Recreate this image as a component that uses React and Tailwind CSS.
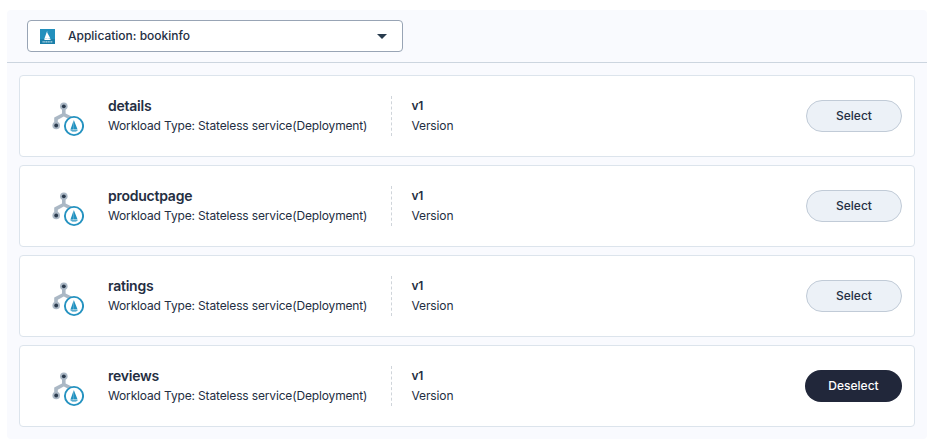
const services = [
  { name: 'details' },
  { name: 'productpage' },
  { name: 'ratings' },
  { name: 'reviews', selected: true },
];

function AppLogo() {
  return (
    <svg className="h-[15px] w-[15px] shrink-0" viewBox="0 0 15 15">
      <rect width="15" height="15" fill="#2290bd" />
      <path d="M0 10h15v5H0z" fill="#1b7fa9" />
      <path d="M7.2 1.8v7.8l-2.9.3z M7.2 3.4l3.2 6.2-3.2.3z M3.8 10.1h7.4l-1.4.9H5z" fill="#fff" />
      <path d="M2.5 12.9h10" stroke="#d9edf5" strokeWidth="1" strokeDasharray="1.3 .4" />
    </svg>
  );
}

function ServiceIcon() {
  return (
    <svg className="mt-[6px] h-[36px] w-[34px] shrink-0" viewBox="0 0 34 36">
      <path d="M13.8 5v8.5L6 17.7V24M13.8 13.5l8 4.2" fill="none" stroke="#abb8c5" strokeWidth="3.6" />
      <circle cx="13.8" cy="5.3" r="3.8" fill="#abb8c5" />
      <circle cx="6.2" cy="24.5" r="3.8" fill="#abb8c5" />
      <circle cx="13.8" cy="5.3" r="1.9" fill="#2b3b4e" />
      <circle cx="6.2" cy="24.5" r="1.9" fill="#2b3b4e" />
      <circle cx="24" cy="25" r="9.1" fill="#fff" stroke="#2492c0" strokeWidth="1.9" />
      <path d="M23.8 18.7v9.7l-3.4.4z M24 19.6l3.6 8.9-3.6-.1z M20 29.2h8.2l-2.2 1.3h-3.8z" fill="#2492c0" />
    </svg>
  );
}

function ServiceCard({ service }) {
  return (
    <li className="flex h-[82px] items-center rounded-[4px] border border-[#dce4ec] bg-white pr-3 pl-[30px]">
      <ServiceIcon />
      <div className="ml-6 w-[283px]">
        <p className="text-[14px] leading-5 font-semibold tracking-[-0.24px]">{service.name}</p>
        <p className="text-[12px] leading-5 font-normal tracking-[-0.15px] whitespace-nowrap">Workload Type: Stateless service(Deployment)</p>
      </div>
      <div className="h-10 border-l border-dashed border-[#cfd4da] pl-[19.5px]">
        <p className="text-[12px] leading-5 font-semibold tracking-[-0.2px]">v1</p>
        <p className="text-[12px] leading-5 font-normal tracking-[-0.12px]">Version</p>
      </div>
      {service.selected ? (
        <button className="ml-auto h-8 w-[97px] rounded-full bg-[#21273a] text-[12px] font-medium text-white">Deselect</button>
      ) : (
        <button className="ml-auto h-8 w-24 rounded-full border border-[#c1cbd7] bg-[#ecf1f7] text-[12px] font-medium">Select</button>
      )}
    </li>
  );
}

export default function App() {
  return (
    <div className="h-[439px] bg-white pt-[10px] pr-[2px] pl-[7px] font-['Inter',sans-serif] text-[#242e42]">
      <main className="h-[429px] rounded-[4px] bg-[#f9fafe]">
        <header className="h-[53px] border-b border-[#ccd5df] px-5 pt-[10px]">
          <button className="flex h-8 w-[376px] items-center rounded-[4px] border border-[#98a4b5] bg-white pr-[15px] pl-[12px]">
            <AppLogo />
            <span className="ml-[13px] text-[12px] font-medium">Application: bookinfo</span>
            <svg className="ml-auto h-[5px] w-[10px]" viewBox="0 0 10 5">
              <path d="M0 0h10L5 5z" fill="#283b4d" />
            </svg>
          </button>
        </header>
        <ul className="flex flex-col gap-2 p-3">
          {services.map((service) => (
            <ServiceCard key={service.name} service={service} />
          ))}
        </ul>
      </main>
    </div>
  );
}
